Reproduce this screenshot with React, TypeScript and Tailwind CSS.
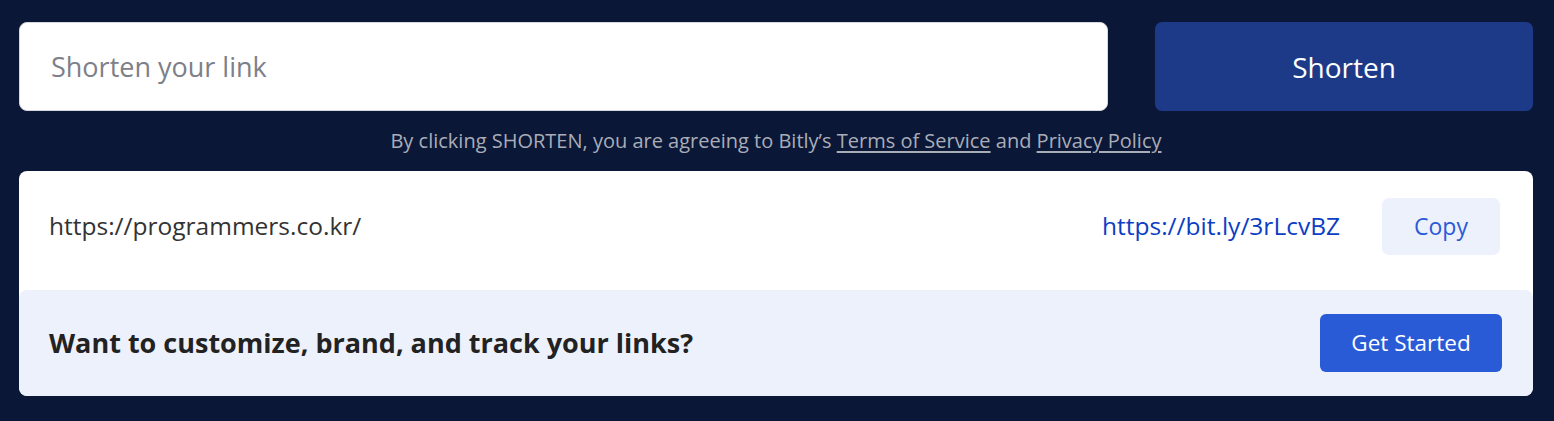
const App = () => {
  return (
    <main className="min-h-[421px] bg-[#0b1736] pt-[22px] pl-[19px] pr-[21px] font-['Open_Sans','Noto_Sans',sans-serif]">
      <div className="flex gap-[47px]">
        <input
          type="text"
          placeholder="Shorten your link"
          className="flex-1 h-[89px] rounded-[8px] bg-white border border-[#d6d8dc] px-[31px] text-[27px] text-[#333] placeholder:text-[#7d8088] outline-none"
        />
        <button className="w-[378px] h-[89px] rounded-[7px] bg-[#1d3a89] text-white text-[28px]">
          Shorten
        </button>
      </div>
      <p className="mt-[17px] mb-[17px] text-center text-[20px] leading-[26px] text-[#a9adb8]">
        By clicking SHORTEN, you are agreeing to Bitly’s{" "}
        <a className="underline underline-offset-[3px]">Terms of Service</a> and{" "}
        <a className="underline underline-offset-[3px]">Privacy Policy</a>
      </p>
      <section className="rounded-[8px] bg-white overflow-hidden">
        <div className="h-[119px] flex items-center pl-[30px] pr-[33px] pb-[8px]">
          <p className="flex-1 text-[24.5px] text-[#333]">https://programmers.co.kr/</p>
          <a className="text-[24.5px] text-[#0b3ec4]">https://bit.ly/3rLcvBZ</a>
          <button className="ml-[42px] w-[118px] h-[57px] rounded-[7px] bg-[#edf1fc] text-[#2a5bd7] text-[23px]">
            Copy
          </button>
        </div>
        <div className="h-[106px] flex items-center justify-between rounded-[8px] bg-[#edf1fc] pl-[30px] pr-[31px]">
          <p className="text-[27px] font-bold text-[#222]">
            Want to customize, brand, and track your links?
          </p>
          <button className="w-[182px] h-[58px] rounded-[6px] bg-[#2a5bd7] text-white text-[22.5px]">
            Get Started
          </button>
        </div>
      </section>
    </main>
  );
};
export default App;
